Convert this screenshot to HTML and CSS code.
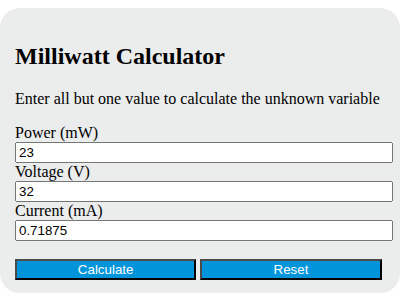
FILE: index.html
```html
<!DOCTYPE html>
<html>
<head>
<meta http-equiv="Content-Type" content="text/html; charset=utf-8"/>
<title>Milliwatt Calculator</title>
<link rel="stylesheet" href="styles.css">
</head>
<body>
<div class="calc">
  <h2>Milliwatt Calculator</h2>
  <p>Enter all but one value to calculate the unknown variable</p>

  <label for="power">Power (mW)</label>
  <input type="text" id="power" value="23">

  <label for="voltage">Voltage (V)</label>
  <input type="text" id="voltage" value="32">

  <label for="current">Current (mA)</label>
  <input type="text" id="current" value="0.71875">

  <div class="buttons">
    <button type="button">Calculate</button>
    <button type="button">Reset</button>
  </div>
</div>
</body>
</html>
```

FILE: styles.css
```css
body {
  margin: 0;
  padding-top: 8px;
  font-family: "Liberation Serif", "Times New Roman", serif;
  font-size: 16px;
  background-color: white;
}

.calc {
  width: 370px;
  padding: 15px 15px 13px;
  background-color: #ebecec;
  border-radius: 20px;
}

.calc h2 {
  font-size: 24px;
  margin: 20px 0;
}

.calc p {
  margin: 16px 0;
}

.calc label {
  display: block;
}

.calc input {
  display: block;
  width: 100%;
  margin: 0;
  font-family: "Liberation Sans", Arial, sans-serif;
  font-size: 13.33px;
}

.buttons {
  margin-top: 18px;
}

.buttons button {
  width: 49%;
  height: 21px;
  margin: 0;
  padding: 0;
  background-color: #0095da;
  color: white;
  font-family: "Liberation Sans", Arial, sans-serif;
  font-size: 13.33px;
  border-style: solid;
  border-width: 2px;
  border-color: #4b4b4b #000 #000 #4b4b4b;
}
```
